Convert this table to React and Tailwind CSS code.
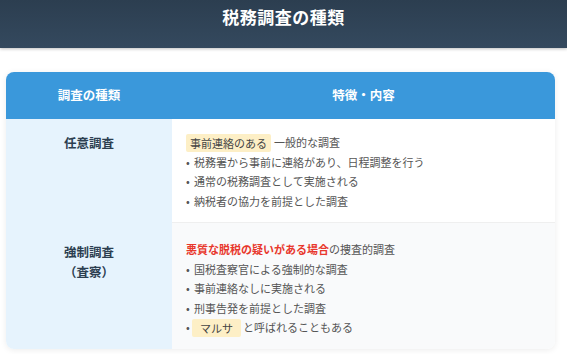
import React from "react";

const font = { fontFamily: '"Noto Sans CJK JP", "Noto Sans", sans-serif' };

const Bullet = ({ children }) => (
  <div className="flex items-center h-[19.5px]">
    <span className="w-[8px] shrink-0 text-[11px] leading-none">•</span>
    <span>{children}</span>
  </div>
);

const App = () => {
  return (
    <div className="w-[567px] h-[354px] bg-white overflow-hidden" style={font}>
      <div className="h-[48px] bg-gradient-to-b from-[#2c3e50] to-[#34495e] shadow-[0_1px_3px_rgba(0,0,0,0.25)] flex justify-center pt-[5px]">
        <h1 className="text-white font-bold text-[17px] leading-[24px] tracking-[0.5px]">税務調査の種類</h1>
      </div>

      <div className="mt-[24px] mx-[6px] w-[549px] rounded-lg overflow-hidden shadow-[0_1px_6px_rgba(0,0,0,0.08)]">
        <div className="flex h-[47px] bg-[#3a98db] text-white font-bold text-[12.5px] items-center">
          <div className="w-[166px] text-center">調査の種類</div>
          <div className="flex-1 text-center">特徴・内容</div>
        </div>

        <div className="flex">
          <div className="w-[166px] bg-[#e6f3fd] flex flex-col">
            <div className="h-[104px] pt-[14px] text-center text-[12.5px] font-bold text-[#2c3e50] leading-[20px]">任意調査</div>
            <div className="h-[126px] pt-[19px] text-center text-[12.5px] font-bold text-[#2c3e50] leading-[20px]">
              <div>強制調査</div>
              <div>（査察）</div>
            </div>
          </div>

          <div className="flex-1 text-[11px] text-[#555] leading-[19.5px]">
            <div className="h-[104px] bg-white pt-[14px] pl-[14px] border-b border-[#efefef]">
              <div className="flex items-center h-[19.5px]">
                <span className="bg-[#fdefc6] px-[4px] rounded-[2px] h-[18px] leading-[18px] text-[#444]">事前連絡のある</span>
                <span className="ml-[3px]">一般的な調査</span>
              </div>
              <Bullet>税務署から事前に連絡があり、日程調整を行う</Bullet>
              <Bullet>通常の税務調査として実施される</Bullet>
              <Bullet>納税者の協力を前提とした調査</Bullet>
            </div>
            <div className="h-[126px] bg-[#f9fafb] pt-[17px] pl-[14px]">
              <div className="h-[19.5px]">
                <span className="text-[#e8372c] font-bold">悪質な脱税の疑いがある場合</span>
                <span>の捜査的調査</span>
              </div>
              <Bullet>国税査察官による強制的な調査</Bullet>
              <Bullet>事前連絡なしに実施される</Bullet>
              <Bullet>刑事告発を前提とした調査</Bullet>
              <div className="flex items-center h-[19.5px]">
                <span className="w-[6px] shrink-0 text-[11px] leading-none">•</span>
                <span className="bg-[#fdefc6] px-[8px] rounded-[2px] h-[18px] leading-[18px] text-[#444]">マルサ</span>
                <span className="ml-[2px]">と呼ばれることもある</span>
              </div>
            </div>
          </div>
        </div>
      </div>
    </div>
  );
};

export default App;
